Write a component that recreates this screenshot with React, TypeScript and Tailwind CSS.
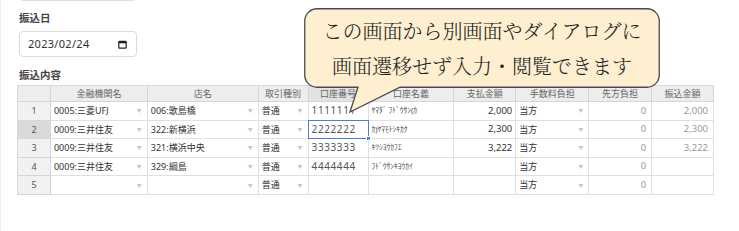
import React from "react";

type Row = {
  no: number;
  bank: string;
  branch: string;
  kind: string;
  acct: string;
  name: string;
  pay: string;
  fee: string;
  other: string;
  amount: string;
};

const rows: Row[] = [
  { no: 1, bank: "0005:三菱UFJ", branch: "006:歌島橋", kind: "普通", acct: "1111111", name: "ﾔﾏﾀﾞ ﾌﾄﾞｳｻﾝ(ｶ", pay: "2,000", fee: "当方", other: "0", amount: "2,000" },
  { no: 2, bank: "0009:三井住友", branch: "322:新横浜", kind: "普通", acct: "2222222", name: "ｶ)ﾔﾏﾓﾄｼｷｶｸ", pay: "2,300", fee: "当方", other: "0", amount: "2,300" },
  { no: 3, bank: "0009:三井住友", branch: "321:横浜中央", kind: "普通", acct: "3333333", name: "ｷﾂｼﾖｳｶﾌｴ", pay: "3,222", fee: "当方", other: "0", amount: "3,222" },
  { no: 4, bank: "0009:三井住友", branch: "329:綱島", kind: "普通", acct: "4444444", name: "ﾌﾄﾞｳｻﾝｷﾖｳｶｲ", pay: "", fee: "当方", other: "0", amount: "" },
  { no: 5, bank: "", branch: "", kind: "普通", acct: "", name: "", pay: "", fee: "当方", other: "0", amount: "" },
];

const Arrow = () => (
  <span className="ml-auto pr-[5px] text-[5px] leading-none text-[#c8c8c8]">▼</span>
);

export default function App() {
  const font = { fontFamily: '"Noto Sans", "Noto Sans CJK JP", sans-serif' };
  return (
    <div
      className="relative w-[739px] h-[231px] overflow-hidden bg-white border-l border-[#ececec] text-[#333]"
      style={font}
    >
      <div className="pl-[18px]">
        {/* previous field's input (only its bottom edge shows) */}
        <div className="-mt-[24px] h-[25px] w-[118px] rounded border border-[#dedede]" />

        <div className="mt-[11px] text-[10.5px] font-semibold leading-[12px] text-[#444]">振込日</div>

        <div className="mt-[7px] flex h-[26px] w-[118px] items-center rounded-[4px] border border-[#dcdcdc] pl-[8px] pr-[9px]">
          <span className="text-[11px] tracking-[0.3px] text-[#333]" style={{ fontFamily: '"Noto Sans", sans-serif' }}>
            2023/02/24
          </span>
          <svg className="ml-auto" width="9" height="9" viewBox="0 0 9 9">
            <rect x="0.8" y="1.3" width="7.4" height="6.9" rx="0.8" fill="none" stroke="#222" strokeWidth="1.2" />
            <rect x="0.8" y="1.3" width="7.4" height="2" fill="#222" />
          </svg>
        </div>

        <div className="mt-[12px] text-[10.5px] font-semibold leading-[12px] text-[#444]">振込内容</div>
      </div>

      {/* grid */}
      <div className="ml-[16px] mt-[4px] w-[697px] border-l border-t border-[#dadada] text-[9px]">
        <div className="flex h-[16px] bg-[#ededed] text-[#666]">
          {[
            ["", "w-[33px]"],
            ["金融機関名", "w-[97px]"],
            ["店名", "w-[111px]"],
            ["取引種別", "w-[50px]"],
            ["口座番号", "w-[60px]"],
            ["口座名義", "w-[86px]"],
            ["支払金額", "w-[62px]"],
            ["手数料負担", "w-[73px]"],
            ["先方負担", "w-[63px]"],
            ["振込金額", "w-[62px]"],
          ].map(([t, w], i) => (
            <div
              key={i}
              className={`${w} flex items-center justify-center border-b border-r border-[#d6d6d6] ${i === 4 ? "bg-[#e2e2e2]" : ""}`}
            >
              {t}
            </div>
          ))}
        </div>
        {rows.map((r) => (
          <div key={r.no} className={`flex ${r.no === 5 ? "h-[19px]" : "h-[18.5px]"}`}>
            <div
              className={`w-[33px] flex items-center justify-center border-b border-r border-[#d6d6d6] text-[#555] ${
                r.no === 2 ? "bg-[#dadada]" : "bg-[#f1f1f1]"
              }`}
            >
              {r.no}
            </div>
            <div className="w-[97px] flex items-center border-b border-r border-[#e0e0e0] pl-[3px]">
              <span>{r.bank}</span>
              <Arrow />
            </div>
            <div className="w-[111px] flex items-center border-b border-r border-[#e0e0e0] pl-[3px]">
              <span>{r.branch}</span>
              <Arrow />
            </div>
            <div className="w-[50px] flex items-center border-b border-r border-[#e0e0e0] pl-[3px]">
              <span>{r.kind}</span>
              <Arrow />
            </div>
            <div
              className={`relative w-[60px] flex items-center pl-[3px] text-[10px] tracking-[0.6px] text-[#555] ${
                r.no === 2
                  ? "border border-[#4a7fd6] -mt-[1px] -ml-[1px] w-[61px]"
                  : "border-b border-r border-[#e0e0e0]"
              }`}
            >
              {r.acct}
              {r.no === 2 && (
                <span className="absolute -bottom-[3px] -right-[3px] h-[5px] w-[5px] bg-[#4a7fd6] border border-white" />
              )}
            </div>
            <div className="w-[86px] flex items-center border-b border-r border-[#e0e0e0] pl-[3px] text-[7.5px] text-[#444]">
              {r.name}
            </div>
            <div className="w-[62px] flex items-center justify-end border-b border-r border-[#e0e0e0] pr-[3px] text-[9.5px]">
              {r.pay}
            </div>
            <div className="w-[73px] flex items-center border-b border-r border-[#e0e0e0] pl-[3px]">
              <span>{r.fee}</span>
              <Arrow />
            </div>
            <div className="w-[63px] flex items-center justify-end border-b border-r border-[#e0e0e0] pr-[5px] text-[9.5px] text-[#999]">
              {r.other}
            </div>
            <div className="w-[62px] flex items-center justify-end border-b border-r border-[#e0e0e0] pr-[5px] text-[9.5px] text-[#999]">
              {r.amount}
            </div>
          </div>
        ))}
      </div>

      {/* callout */}
      <div className="absolute left-[303px] top-[8px] h-[80px] w-[356px]">
        <svg className="absolute left-0 top-0" width="356" height="106" viewBox="0 0 356 106">
          <path
            d="M13 0.75 H343 A12.25 12.25 0 0 1 355.25 13 V67 A12.25 12.25 0 0 1 343 79.25 H96 L46 104 L54 79.25 H13 A12.25 12.25 0 0 1 0.75 67 V13 A12.25 12.25 0 0 1 13 0.75 Z"
            fill="#fdefcf"
            stroke="#4a4a4a"
            strokeWidth="1.3"
          />
        </svg>
        <div
          className="relative flex h-[80px] flex-col items-center justify-center text-[20px] leading-[35px] text-[#222]"
          style={{ fontFamily: '"Noto Serif CJK JP", "Noto Sans CJK JP", serif', fontWeight: 300 }}
        >
          <div className="-mt-[1px]">この画面から別画面やダイアログに</div>
          <div>画面遷移せず入力・閲覧できます</div>
        </div>
      </div>
    </div>
  );
}
